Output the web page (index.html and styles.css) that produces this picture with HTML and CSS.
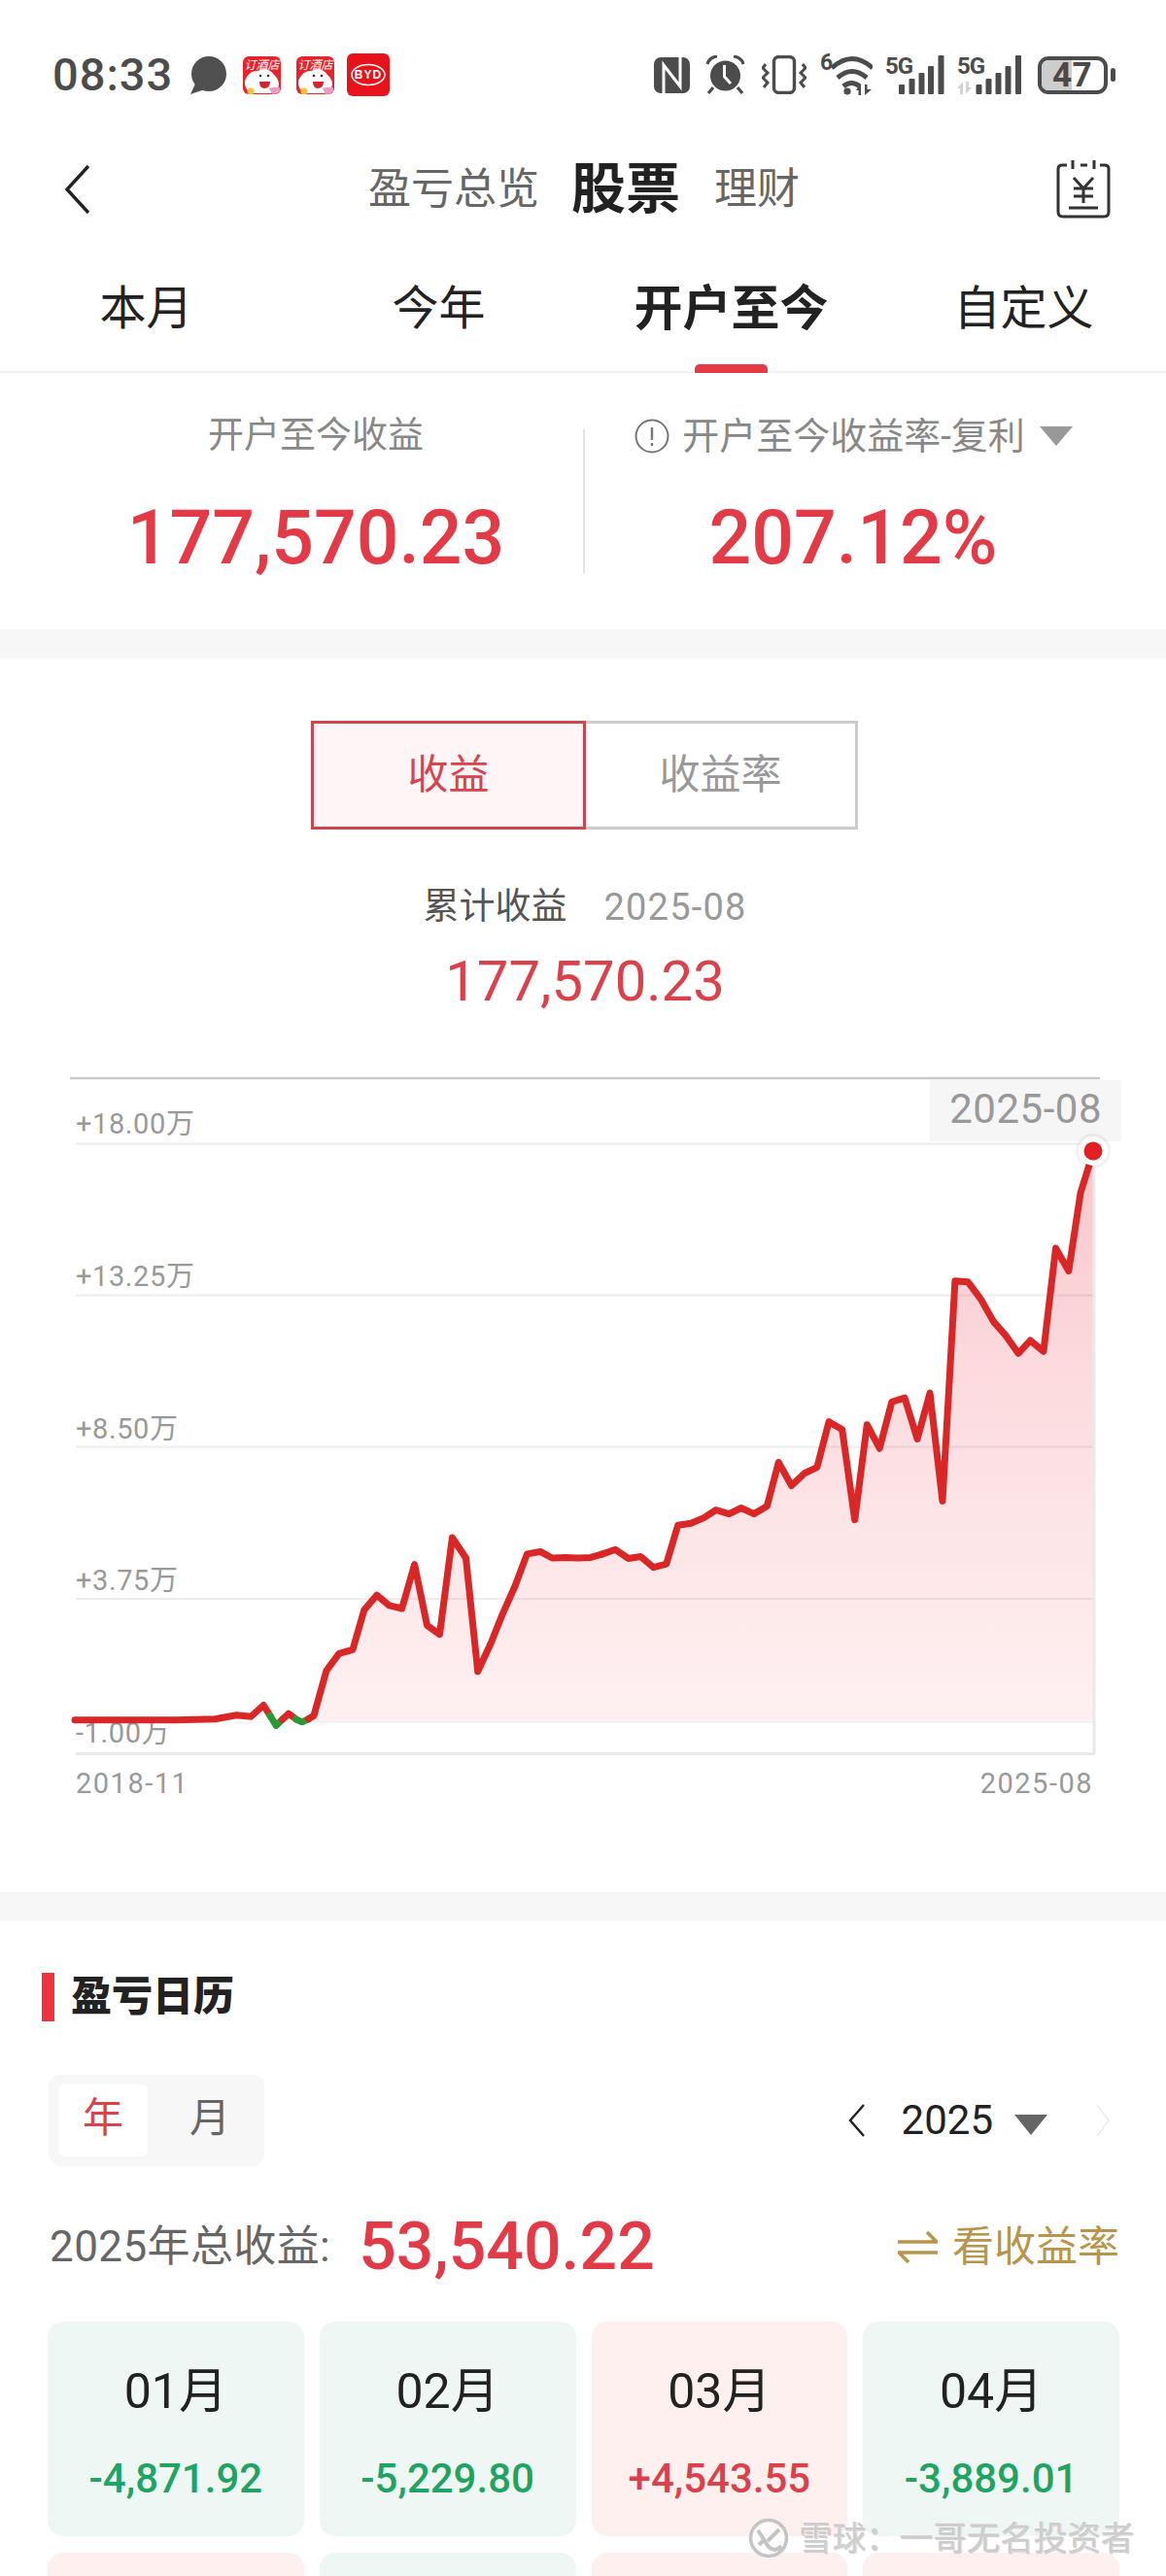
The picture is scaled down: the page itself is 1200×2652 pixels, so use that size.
FILE: index.html
```html
<!DOCTYPE html>
<html lang="zh-CN">
<head>
<meta charset="utf-8">
<title>盈亏总览</title>
<link rel="stylesheet" href="styles.css">
</head>
<body>
<div class="page">
  <header class="status">
    <span class="time">08:33</span>
    <svg class="ic bubble" width="41" height="39" viewBox="0 0 41 39"><circle cx="21" cy="18" r="18" fill="#505050"/><path d="M8 26 L2 39 L20 33Z" fill="#505050"/></svg>
    <svg class="ic app1" width="39" height="39" viewBox="0 0 39 39"><rect width="39" height="39" rx="6" fill="#e8232b"/><text x="19.5" y="13" class="app-text">订酒店</text><path d="M2 25 Q7 14 15 15 Q26 10 32 19 Q39 25 36 33 L29 38 H9 Q1 34 2 25Z" fill="#fff"/><path d="M17 26 H28 Q28 33 22 33 Q17 33 17 26Z" fill="#d3262e"/><circle cx="18" cy="20" r="1.3" fill="#333"/><circle cx="26" cy="20" r="1.3" fill="#333"/><path d="M27 33 Q32 31 38 32 V36 Q36 39 30 39Z" fill="#ee9bc4"/><circle cx="8" cy="36" r="3.5" fill="#f6c232"/></svg>
    <svg class="ic app2" width="39" height="39" viewBox="0 0 39 39"><rect width="39" height="39" rx="6" fill="#e8232b"/><text x="19.5" y="13" class="app-text">订酒店</text><path d="M2 25 Q7 14 15 15 Q26 10 32 19 Q39 25 36 33 L29 38 H9 Q1 34 2 25Z" fill="#fff"/><path d="M17 26 H28 Q28 33 22 33 Q17 33 17 26Z" fill="#d3262e"/><circle cx="18" cy="20" r="1.3" fill="#333"/><circle cx="26" cy="20" r="1.3" fill="#333"/><path d="M27 33 Q32 31 38 32 V36 Q36 39 30 39Z" fill="#ee9bc4"/><circle cx="8" cy="36" r="3.5" fill="#f6c232"/></svg>
    <svg class="ic byd" width="44" height="44" viewBox="0 0 44 44"><rect width="44" height="44" rx="6" fill="#e8121a"/><ellipse cx="22" cy="22" rx="17" ry="10.5" fill="none" stroke="#fff" stroke-width="1.6"/><text x="22" y="26" class="byd-text">BYD</text></svg>

    <span class="status-right">
      <svg class="ic" width="37" height="37" viewBox="0 0 37 37"><rect width="37" height="37" rx="7" fill="#4c4c4c"/><path d="M10 38 V8 L27 30 V-1" fill="none" stroke="#fff" stroke-width="3"/></svg>
      <svg class="ic alarm" width="41" height="40" viewBox="0 0 41 40"><circle cx="20.5" cy="21" r="15.5" fill="#4c4c4c"/><path d="M19.5 10 V22 L26 29" fill="none" stroke="#fff" stroke-width="3"/><path d="M2 9 Q4 2 12 1 M39 9 Q37 2 29 1 M8 33 L3 39 M33 33 L38 39" fill="none" stroke="#4c4c4c" stroke-width="3.2"/></svg>
      <svg class="ic vib" width="46" height="40" viewBox="0 0 46 40"><rect x="12.5" y="1.5" width="21" height="37" rx="5" fill="none" stroke="#4c4c4c" stroke-width="3.4"/><path d="M4 9 L1 13 L6 18 L1 23 L6 28 L2 33 M42 9 L45 13 L40 18 L45 23 L40 28 L44 33" fill="none" stroke="#4c4c4c" stroke-width="3"/></svg>
      <span class="wifi">
        <span class="wifi-six">6</span>
        <svg class="ic" width="54" height="42" viewBox="0 0 54 42"><path d="M12 14 Q33 -5 54 14 M18 24 Q33 11 48 24 M24 33 Q32 26 41 33" fill="none" stroke="#4c4c4c" stroke-width="5"/><circle cx="28" cy="38" r="3.6" fill="#4c4c4c"/><path d="M41 31 L37 37 H39.5 V42 H42 V31Z M46 31 H48.5 V36 L53 36 L46 42Z" fill="#4c4c4c"/></svg>
      </span>
      <span class="sig sig1">
        <span class="five-g">5G</span>
        <svg class="ic" width="61" height="40" viewBox="0 0 61 40"><g fill="#4c4c4c"><rect x="14" y="30" width="6" height="10" rx="1"/><rect x="24.500" y="24" width="6" height="16" rx="1"/><rect x="34.500" y="18" width="6" height="22" rx="1"/><rect x="44" y="11" width="6" height="29" rx="1"/><rect x="54.500" y="0" width="6" height="40" rx="1"/></g></svg>
      </span>
      <span class="sig sig2">
        <span class="five-g">5G</span>
        <svg class="ic" width="66" height="40" viewBox="0 0 66 40"><path d="M6 27 L0 34 H3 V40 H6Z M9 27 H12 V33 H15 L9 40Z" fill="#d3d3d3"/><g fill="#4c4c4c"><rect x="19.500" y="30" width="6" height="10" rx="1"/><rect x="29.500" y="24" width="6" height="16" rx="1"/><rect x="39.500" y="18" width="6" height="22" rx="1"/><rect x="49.500" y="11" width="6" height="29" rx="1"/><rect x="60" y="0" width="6" height="40" rx="1"/></g></svg>
      </span>
      <span class="battery"><span class="battery-level"></span><span class="battery-num">47</span></span>
      <span class="battery-cap"></span>
    </span>
  </header>

  <nav class="topnav">
    <svg class="back" width="27" height="52" viewBox="0 0 27 52"><path d="M25 2 L3 26 L25 50" fill="none" stroke="#222" stroke-width="3.4"/></svg>
    <div class="topnav-titles">
      <span class="topnav-item">盈亏总览</span>
      <span class="topnav-item topnav-active">股票</span>
      <span class="topnav-item">理财</span>
    </div>
    <svg class="ledger" width="56" height="60" viewBox="0 0 56 60"><path d="M11 5 H6 Q2 5 2 9 V53 Q2 58 7 58 H49 Q54 58 54 53 V9 Q54 5 50 5 H45 M17 0 V9 M39 0 V9 M25 5 H32 M18 18 L28 29 L38 18 M18 29 H38 M18 37 H38 M28 29 V44 M13 49 H43" fill="none" stroke="#333" stroke-width="3"/></svg>
  </nav>

  <div class="tabs">
    <div class="tab">本月</div>
    <div class="tab">今年</div>
    <div class="tab tab-active">开户至今</div>
    <div class="tab">自定义</div>
  </div>

  <section class="summary">
    <div class="summary-col summary-left">
      <div class="summary-label">开户至今收益</div>
      <div class="summary-value">177,570.23</div>
    </div>
    <div class="summary-divider"></div>
    <div class="summary-col summary-right">
      <div class="summary-label summary-label-wide">
        <svg class="info" width="36" height="36" viewBox="0 0 36 36"><circle cx="18" cy="18" r="16.500" fill="none" stroke="#777" stroke-width="2"/><path d="M18 9 V22 M18 25 V28" stroke="#777" stroke-width="2.400" fill="none"/></svg>
        <span>开户至今收益率-复利</span>
        <span class="tri tri-light"></span>
      </div>
      <div class="summary-value">207.12%</div>
    </div>
  </section>

  <div class="band"></div>

  <section class="chart-section">
    <div class="seg">
      <div class="seg-item seg-active">收益</div>
      <div class="seg-item">收益率</div>
    </div>
    <div class="chart-meta"><span class="meta-name">累计收益</span><span class="meta-date">2025-08</span></div>
    <div class="chart-value">177,570.23</div>
    <svg class="chart" width="1200" height="858" viewBox="0 1090 1200 858">
      <defs>
        <linearGradient id="area" gradientUnits="userSpaceOnUse" x1="0" y1="200" x2="0" y2="1358">
          <stop offset="0" stop-color="#f9c6ca"/>
          <stop offset="0.45" stop-color="#fcdde0"/>
          <stop offset="0.75" stop-color="#fde8ea"/>
          <stop offset="1" stop-color="#fef0f1"/>
        </linearGradient>
      </defs>
      <g transform="translate(40 1080) scale(.36995 .5102)">
        <polygon fill="url(#area)" points="765,1358 765,1345 800,1254 835,1220 873,1212 905,1132 940,1102 975,1123 1010,1129 1045,1040 1080,1163 1115,1181 1150,986 1188,1027 1221,1256 1258,1198 1290,1140 1325,1083 1358,1019 1395,1014 1428,1027 1465,1026 1500,1027 1535,1026 1568,1019 1568,1358"/>
      </g>
      <g transform="translate(620 1080) scale(.36995 .5102)">
        <polygon fill="url(#area)" points="0,1358 0,1019 36,1010 72,1028 106,1024 142,1046 178,1039 210,961 246,957 282,946 316,930 352,938 386,926 422,938 458,922 490,834 526,881 562,856 597,844 630,752 667,768 702,950 736,758 771,806 805,712 841,704 876,787 911,694 946,912 981,468 1017,470 1052,504 1088,550 1122,578 1157,614 1190,588 1227,610 1261,402 1297,448 1330,290 1355,232 1366,205 1366,1358"/>
      </g>
      <path class="axis-top" d="M72 1110 H1132"/>
      <path class="grid" d="M78 1177.500 H1126 M78 1333.500 H1126 M78 1489.500 H1126 M78 1646 H1126"/>
      <path class="grid grid-zero" d="M78 1773 H1126"/>
      <path class="axis" d="M78 1805.500 H1127 M1126 1177 V1805"/>
      <text class="tick" x="78" y="1167">+18.00万</text>
      <text class="tick" x="78" y="1324">+13.25万</text>
      <text class="tick" x="78" y="1481">+8.50万</text>
      <text class="tick" x="78" y="1637">+3.75万</text>
      <text class="tick" x="78" y="1794">-1.00万</text>
      <text class="tick tick-date" x="78" y="1846">2018-11</text>
      <text class="tick tick-date tick-end" x="1125" y="1846">2025-08</text>
      <g transform="translate(40 1080) scale(.36995 .5102)">
        <polyline class="line" points="100,1354 200,1354 380,1354 490,1352 550,1344 590,1347 625,1324 643,1345"/>
        <polyline class="line line-green" points="643,1345 660,1365 677,1353"/>
        <polyline class="line" points="677,1353 695,1341 715,1352"/>
        <polyline class="line line-green" points="715,1352 732,1358 750,1352"/>
        <polyline class="line" points="750,1352 765,1345 800,1254 835,1220 873,1212 905,1132 940,1102 975,1123 1010,1129 1045,1040 1080,1163 1115,1181 1150,986 1188,1027 1221,1256 1258,1198 1290,1140 1325,1083 1358,1019 1395,1014 1428,1027 1465,1026 1500,1027 1535,1026 1568,1019"/>
      </g>
      <g transform="translate(620 1080) scale(.36995 .5102)">
        <polyline class="line" points="0,1019 36,1010 72,1028 106,1024 142,1046 178,1039 210,961 246,957 282,946 316,930 352,938 386,926 422,938 458,922 490,834 526,881 562,856 597,844 630,752 667,768 702,950 736,758 771,806 805,712 841,704 876,787 911,694 946,912 981,468 1017,470 1052,504 1088,550 1122,578 1157,614 1190,588 1227,610 1261,402 1297,448 1330,290 1355,232 1366,205"/>
      </g>
      <rect class="tip-box" x="957" y="1112" width="197" height="63"/>
      <text class="tip-text" x="1134" y="1156">2025-08</text>
      <circle cx="1125" cy="1185" r="18" fill="rgba(0,0,0,.05)"/>
      <circle cx="1125" cy="1185" r="15" fill="#fff"/>
      <circle cx="1125" cy="1185" r="9.500" fill="#e21f23"/>
    </svg>
  </section>

  <div class="band"></div>

  <section class="calendar">
    <div class="cal-title"><span class="cal-mark"></span><h2>盈亏日历</h2></div>
    <div class="cal-controls">
      <div class="switch">
        <span class="switch-item switch-active">年</span>
        <span class="switch-item">月</span>
      </div>
      <div class="yearnav">
        <svg width="18" height="36" viewBox="0 0 18 36"><path d="M16 2 L2 18 L16 34" fill="none" stroke="#222" stroke-width="2.400"/></svg>
        <span class="year">2025</span>
        <span class="tri tri-dark"></span>
        <svg class="year-next" width="16" height="36" viewBox="0 0 16 36"><path d="M2 2 L14 18 L2 34" fill="none" stroke="#eee" stroke-width="2"/></svg>
      </div>
    </div>
    <div class="cal-total">
      <span class="total-label">2025年总收益:</span>
      <span class="total-value">53,540.22</span>
      <span class="total-switch">
        <svg width="41" height="33" viewBox="0 0 41 33"><path d="M0 11 H40 L30 1 M41 22 H1 L11 32" fill="none" stroke="#b8954a" stroke-width="3.600"/></svg>
        <span>看收益率</span>
      </span>
    </div>
    <div class="months">
      <div class="month month-loss"><div class="month-name">01月</div><div class="month-val">-4,871.92</div></div>
      <div class="month month-loss"><div class="month-name">02月</div><div class="month-val">-5,229.80</div></div>
      <div class="month month-gain"><div class="month-name">03月</div><div class="month-val">+4,543.55</div></div>
      <div class="month month-loss"><div class="month-name">04月</div><div class="month-val">-3,889.01</div></div>
      <div class="month month-gain"></div>
      <div class="month month-loss"></div>
      <div class="month month-gain"></div>
      <div class="month month-gain"></div>
    </div>
  </section>

  <div class="watermark">
    <svg width="42" height="42" viewBox="0 0 42 42"><circle cx="21" cy="21" r="18.500" fill="rgba(255,255,255,.75)" stroke="#c4c4c4" stroke-width="3.500"/><path d="M10 13 L21 30 Q28 36 34 29 M32 12 L20 24 M11 28 L17 22" fill="none" stroke="#c4c4c4" stroke-width="4"/></svg>
    <span>雪球：一哥无名投资者</span>
  </div>
</div>
</body>
</html>
```

FILE: styles.css
```css
html, body { margin: 0; padding: 0; background: #fff; }
body { font-family: Roboto, "Noto Sans CJK SC", sans-serif; color: #222; }
.page { position: relative; width: 1200px; height: 2652px; overflow: hidden; background: #fff; }

/* status bar */
.status { display: flex; align-items: center; height: 44px; padding: 55px 0 55px 54px; color: #4c4c4c; }
.time { font-size: 47px; font-weight: 500; line-height: 44px; letter-spacing: 1px; color: #4c4c4c; width: 124px; white-space: nowrap; }
.ic { display: block; flex: none; }
.bubble { margin-left: 16px; }
.app1 { margin-left: 15px; }
.app2 { margin-left: 16px; }
.byd { margin-left: 13px; }
.status-right { display: flex; align-items: center; margin-left: auto; padding-right: 52px; }
.alarm { margin-left: 16px; }
.vib { margin-left: 17px; }
.wifi { position: relative; display: block; margin-left: 14px; }
.sig { position: relative; display: block; margin-left: 13px; }
.battery { position: relative; display: block; width: 72px; height: 39px; margin-left: 17px; box-sizing: border-box; border: 4px solid #4c4c4c; border-radius: 11px; overflow: hidden; }
.battery-level { display: block; width: 31px; height: 100%; background: #cdcdcd; }
.battery-num { position: absolute; left: 11px; top: -4px; font-size: 35px; line-height: 39px; font-weight: 700; color: #4a4a4a; letter-spacing: .5px; }
.battery-cap { display: block; width: 5px; height: 14px; margin-left: 3px; background: #4c4c4c; border-radius: 2.5px; }
.app-text { font-size: 12px; fill: #fff; text-anchor: middle; font-style: italic; font-family: "Noto Sans CJK SC", sans-serif; }
.byd-text { font-size: 12px; font-weight: 700; fill: #fff; text-anchor: middle; letter-spacing: 1px; font-family: "Liberation Sans", sans-serif; }
.wifi-six { position: absolute; left: 0; top: -3px; font-size: 23px; line-height: 24px; font-weight: 700; color: #4c4c4c; }
.five-g { position: absolute; left: 0; top: -1px; font-size: 24px; line-height: 24px; font-weight: 700; letter-spacing: -1px; color: #4c4c4c; white-space: nowrap; }

/* top nav */
.topnav { position: relative; display: flex; align-items: center; justify-content: space-between; height: 82px; padding: 0 57px 0 66px; }
.back { display: block; }
.ledger { display: block; }
.topnav-titles { display: flex; align-items: center; margin-left: 286px; margin-right: auto; }
.topnav-item { font-size: 44px; line-height: 82px; color: #666; white-space: nowrap; margin-right: 33px; }
.topnav-active { font-size: 56px; font-weight: 700; color: #222; margin-right: 35px; }

/* tabs */
.tabs { display: grid; grid-template-columns: repeat(4, 301px); height: 146px; border-bottom: 2px solid #f1f1f1; box-sizing: content-box; }
.tab { position: relative; padding-top: 56px; font-size: 48px; line-height: 52px; text-align: center; color: #222; }
.tab-active { font-size: 50px; font-weight: 700; }
.tab-active::after { content: ""; position: absolute; left: 113px; bottom: -2px; width: 75px; height: 9px; background: #e63946; border-radius: 5px 5px 0 0; }

/* summary */
.summary { display: flex; height: 264px; }
.summary-col { box-sizing: border-box; text-align: center; padding-top: 40px; }
.summary-left { width: 600px; padding-left: 50px; }
.summary-right { width: 552px; margin-left: 0; }
.summary-divider { width: 2px; height: 148px; margin-top: 58px; background: #e2e2e2; flex: none; }
.summary-label { display: flex; align-items: center; justify-content: center; gap: 13px; height: 50px; font-size: 37px; line-height: 50px; color: #888; white-space: nowrap; }
.summary-label-wide { font-size: 38px; margin-left: 1px; }
.info { display: block; flex: none; }
.summary-value { margin-top: 35px; font-size: 77px; line-height: 90px; font-weight: 500; color: #e23b47; white-space: nowrap; }
.tri { display: block; width: 0; height: 0; border-style: solid; border-color: transparent; }
.tri-light { margin-left: 2px; border-width: 20px 17.5px 0; border-top-color: #999; }
.tri-dark { border-width: 21px 17px 0; border-top-color: #666; margin-top: 8px; }

.band { height: 30px; background: #f7f7f7; }

/* chart section */
.chart-section { height: 1270px; padding-top: 64px; box-sizing: border-box; text-align: center; }
.seg { display: flex; justify-content: center; height: 112px; margin-left: 3px; }
.seg-item { box-sizing: border-box; width: 280px; border: 3px solid #ccc; border-left: 0; font-size: 42px; line-height: 106px; color: #999; }
.seg-active { width: 283px; border: 3px solid #c9484f; background: #fff5f6; color: #d9434d; }
.chart-meta { display: flex; justify-content: center; align-items: center; gap: 38px; height: 50px; margin-top: 55px; padding-left: 4px; font-size: 37px; line-height: 50px; }
.meta-name { color: #555; }
.meta-date { color: #999; font-size: 38px; letter-spacing: 1.2px; }
.chart-value { margin-top: 16px; padding-left: 4px; font-size: 58px; line-height: 70px; color: #d9414b; }
.chart { display: block; margin-top: 45px; }
.axis-top { stroke: #c9c9c9; stroke-width: 2.5; fill: none; }
.grid { stroke: rgba(0,0,0,.07); stroke-width: 2; fill: none; }
.grid-zero { stroke: rgba(0,0,0,.03); }
.axis { stroke: #eaeaea; stroke-width: 3; fill: none; }
.tick { font-size: 29px; fill: #999; letter-spacing: .6px; font-family: Roboto, "Noto Sans CJK SC", sans-serif; }
.tick-date { letter-spacing: 1.5px; }
.tick-end { text-anchor: end; }
.line { fill: none; stroke: #d92626; stroke-width: 7; stroke-linejoin: round; stroke-linecap: round; vector-effect: non-scaling-stroke; }
.line-green { stroke: #2b9a35; }
.tip-box { fill: #f6f6f6; }
.tip-text { font-size: 42px; fill: #999; text-anchor: end; letter-spacing: .5px; font-family: Roboto, sans-serif; }

/* calendar */
.calendar { padding: 53px 48px 0 50px; }
.cal-title { display: flex; align-items: center; height: 50px; margin-left: -7px; }
.cal-mark { width: 13px; height: 50px; background: #f0343f; margin-right: 17px; }
.cal-title h2 { margin: 0; font-size: 42px; line-height: 50px; font-weight: 900; color: #222; }
.cal-controls { display: flex; align-items: center; justify-content: space-between; margin-top: 55px; }
.switch { display: flex; box-sizing: border-box; width: 222px; height: 94px; padding: 10px; background: #f7f7f7; border-radius: 12px; }
.switch-item { width: 92px; margin-right: 19px; font-size: 42px; line-height: 70px; text-align: center; color: #666; }
.switch-active { margin-right: 0; background: #fff; border-radius: 6px; color: #d9434d; padding-bottom: 4px; height: 70px; }
.switch-item + .switch-item { width: 92px; margin-left: 18px; margin-right: 0; }
.yearnav { display: flex; align-items: center; padding-right: 9px; }
.year { margin-left: 37px; margin-right: 22px; font-size: 42px; line-height: 50px; color: #222; }
.year-next { margin-left: 49px; }
.cal-total { display: flex; align-items: center; height: 70px; margin-top: 48px; padding-left: 1px; }
.total-label { font-size: 44px; line-height: 70px; letter-spacing: .4px; color: #666; white-space: nowrap; }
.total-value { margin-left: 29px; font-size: 68px; line-height: 70px; font-weight: 500; color: #e23b47; white-space: nowrap; }
.total-switch { display: flex; align-items: center; gap: 15px; margin-left: auto; font-size: 43px; line-height: 70px; color: #b8954a; }
.months { display: grid; grid-template-columns: repeat(4, 1fr); gap: 17px 16px; margin-top: 42px; margin-left: -1px; }
.month { height: 221px; border-radius: 16px; box-sizing: border-box; padding-top: 42px; text-align: center; }
.month-loss { background: #eef7f4; }
.month-gain { background: #fff0f0; }
.month-name { font-size: 50px; line-height: 60px; color: #222; }
.month-val { margin-top: 30px; font-size: 42px; line-height: 60px; font-weight: 500; }
.month-loss .month-val { color: #1fa463; }
.month-gain .month-val { color: #d9414b; }

.watermark { position: absolute; left: 770px; top: 2592px; display: flex; align-items: center; gap: 10px; height: 42px; font-size: 34.5px; line-height: 42px; letter-spacing: 0; color: #cdcdcd; text-shadow: 0 0 2px #fff, 1px 1px 1px rgba(120,120,120,.5); white-space: nowrap; }
```
